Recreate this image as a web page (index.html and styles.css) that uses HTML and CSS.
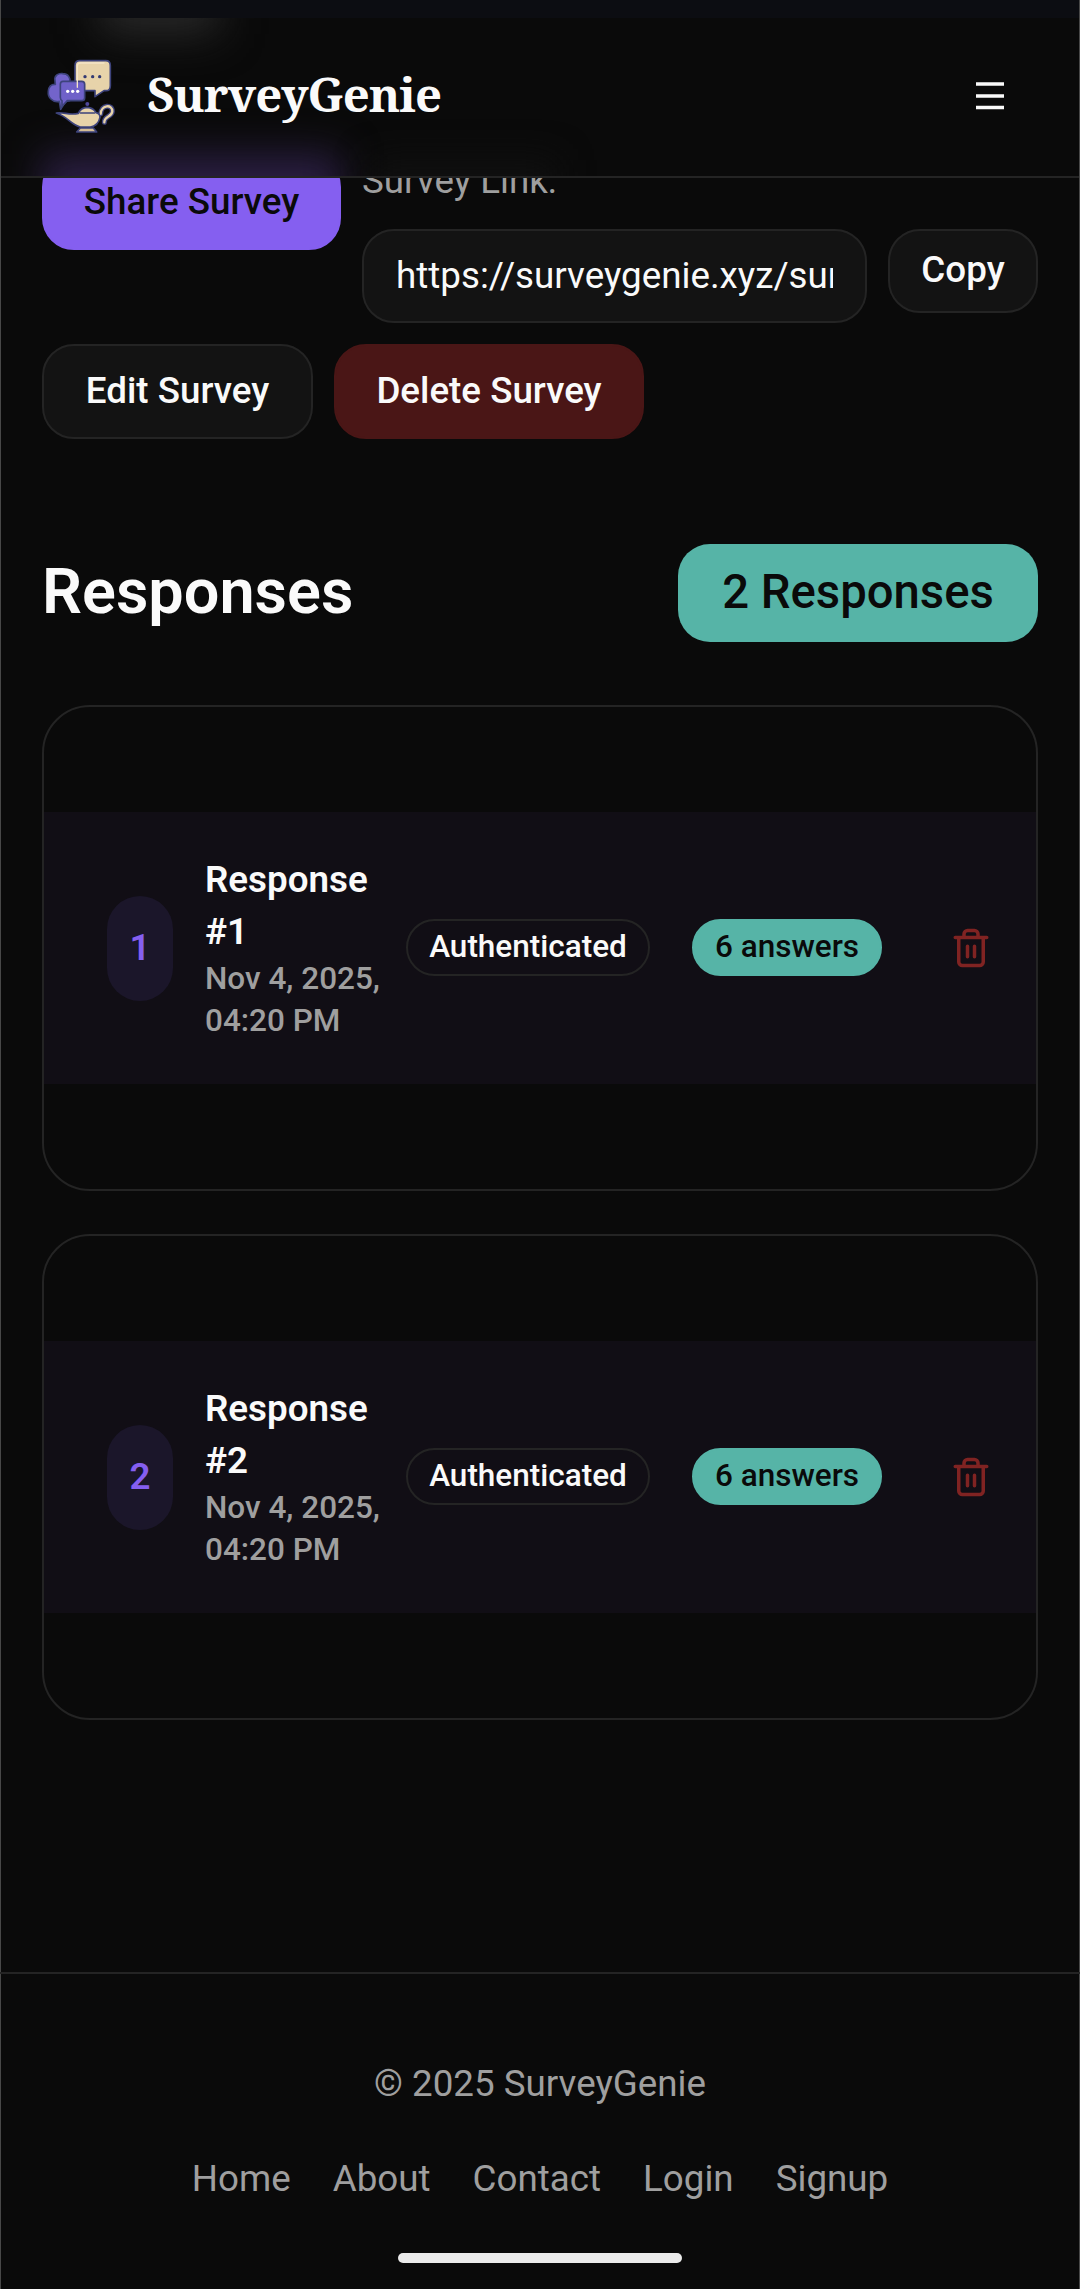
FILE: index.html
```html
<!DOCTYPE html>
<html lang="en">
<head>
<meta charset="utf-8">
<title>SurveyGenie</title>
<link rel="stylesheet" href="styles.css">
</head>
<body>
<div class="app">
  <div class="status-strip"></div>
  <header class="header">
    <span class="glow glow-light"></span>
    <span class="glow glow-accent"></span>
    <span class="glow glow-faint"></span>
    <a class="brand">
      <svg class="logo" viewBox="42 48 225 240" stroke-linejoin="round" stroke-linecap="round">
        <g stroke="#3d437c" stroke-width="5">
          <path fill="#7364cb" d="M75 122C72 106 86 99 98 101C114 101 122 113 119 125L119 182L106 184L92 208L88 184C66 188 53 171 55 154C56 140 64 132 76 133Z"/>
          <path fill="#e7d3aa" d="M149 62H227Q241 62 241 77V137Q241 152 228 152H222L195 170V152H149Q135 150 135 137V77Q135 62 149 62Z"/>
          <path fill="#6f61c9" d="M99 124H155Q164 124 164 133V173Q164 182 155 182H112L96 199V182Q91 180 91 172V133Q91 124 99 124Z"/>
          <path fill="none" stroke-width="15" d="M212 222C213 193 248 192 247 214C246 231 222 228 223 247"/>
          <path fill="none" stroke="#e7d3aa" stroke-width="7" d="M212 222C213 193 248 192 247 214C246 231 222 228 223 247"/>
          <path fill="#e7d3aa" d="M79 219C100 215 119 227 145 220Q152 203 172 202Q190 203 198 218Q210 220 210 232Q205 257 181 261H151C121 253 115 231 79 219Z"/>
          <path fill="#d5bd95" d="M151 264H190L200 276H140Z"/>
        </g>
        <circle cx="172" cy="192" r="6" fill="#4f489c"/>
        <path d="M151 219H194" fill="none" stroke="#3d437c" stroke-width="4"/>
        <path d="M142 142V78Q142 69 152 69H222" fill="none" stroke="#f4e5c8" stroke-width="4"/>
        <g fill="#333a72"><circle cx="165" cy="110" r="5"/><circle cx="188" cy="110" r="5"/><circle cx="209" cy="110" r="5"/></g>
        <g fill="#fff"><circle cx="113" cy="154" r="5"/><circle cx="128" cy="154" r="5"/><circle cx="143" cy="154" r="5"/></g>
      </svg>
      <span class="brand-name">SurveyGenie</span>
    </a>
    <svg class="menu" viewBox="0 0 28 28"><path d="M0 2h28M0 14h28M0 25.5h28" stroke="#fafafa" stroke-width="3.4"/></svg>
  </header>

  <main class="main">
    <section class="actions">
      <div class="share-row">
        <button class="btn btn-primary">Share Survey</button>
        <div class="link">
          <label class="link-label">Survey Link:</label>
          <div class="link-row">
            <div class="link-input"><span class="link-text">https://surveygenie.xyz/survey</span></div>
            <button class="btn btn-copy">Copy</button>
          </div>
        </div>
      </div>
      <div class="edit-row">
        <button class="btn btn-edit">Edit Survey</button>
        <button class="btn btn-delete">Delete Survey</button>
      </div>
    </section>

    <section class="heading">
      <h2 class="title">Responses</h2>
      <span class="count">2 Responses</span>
    </section>

    <section class="cards">
      <article class="card">
        <div class="card-row">
          <span class="num">1</span>
          <div class="info"><span class="name">Response<br>#1</span><span class="date">Nov 4, 2025,<br>04:20 PM</span></div>
          <span class="pill pill-outline">Authenticated</span>
          <span class="pill pill-teal">6 answers</span>
          <svg class="trash" viewBox="0 0 24 24"><path d="M3 6h18M19 6v14c0 1-1 2-2 2H7c-1 0-2-1-2-2V6M8 6V4c0-1 1-2 2-2h4c1 0 2 1 2 2v2M10 11v6M14 11v6"/></svg>
        </div>
      </article>
      <article class="card">
        <div class="card-row">
          <span class="num">2</span>
          <div class="info"><span class="name">Response<br>#2</span><span class="date">Nov 4, 2025,<br>04:20 PM</span></div>
          <span class="pill pill-outline">Authenticated</span>
          <span class="pill pill-teal">6 answers</span>
          <svg class="trash" viewBox="0 0 24 24"><path d="M3 6h18M19 6v14c0 1-1 2-2 2H7c-1 0-2-1-2-2V6M8 6V4c0-1 1-2 2-2h4c1 0 2 1 2 2v2M10 11v6M14 11v6"/></svg>
        </div>
      </article>
    </section>
  </main>

  <footer class="footer">
    <p class="copyright">© 2025 SurveyGenie</p>
    <nav class="links"><a>Home</a><a>About</a><a>Contact</a><a>Login</a><a>Signup</a></nav>
    <div class="home-bar"></div>
  </footer>
</div>
</body>
</html>
```
FILE: styles.css
```css
* { box-sizing: border-box; }
body {
  margin: 0;
  background: #0a0a0a;
  color: #fafafa;
  font-family: Roboto, sans-serif;
  font-size: 36.75px;
}
.app {
  width: 1080px;
  height: 2289px;
  overflow: hidden;
  display: flex;
  flex-direction: column;
  box-shadow: inset 1px 0 #484848, inset -1px 0 #484848;
}
.status-strip { height: 18px; flex: none; margin: 0 1px; background: #0c0d12; }
.header {
  position: relative;
  z-index: 1;
  flex: none;
  height: 160px;
  margin: 0 1px;
  padding: 0 75px 0 43px;
  background: #0a0a0a;
  border-bottom: 2px solid #242424;
  display: flex;
  align-items: center;
  justify-content: space-between;
  overflow: hidden;
}
.glow { position: absolute; }
.glow-light { left: 98px; top: -40px; width: 120px; height: 56px; background: #282828; filter: blur(21px); }
.glow-accent { left: 41px; top: 136px; width: 299px; height: 70px; background: #2a1e42; filter: blur(19px); }
.glow-faint { left: 370px; top: 142px; width: 185px; height: 50px; background: #101010; filter: blur(17px); }
.brand { position: relative; display: flex; align-items: center; gap: 28px; }
.logo { width: 75px; height: 80px; margin-top: -3px; }
.brand-name {
  font-family: "Noto Serif", "Droid Serif", "DejaVu Serif Condensed", "DejaVu Serif", serif;
  font-stretch: condensed;
  font-weight: 700;
  font-size: 47.25px;
  line-height: 64px;
  letter-spacing: -1.02px;
  padding-bottom: 7px;
}
.menu { width: 28px; height: 28px; margin-bottom: 2px; }

.main { padding: 0 42px; flex: none; height: 1794px; }
.actions { margin-top: -23px; }
.share-row { display: flex; gap: 21px; align-items: flex-start; }
.btn {
  font: 500 36.75px Roboto, sans-serif;
  height: 95px;
  padding: 0 0 3px;
  border: 2px solid #242424;
  border-radius: 32px;
  background: #131313;
  color: #fafafa;
  white-space: nowrap;
  flex: none;
}
.btn-primary { width: 299px; background: #855ff0; border-color: #855ff0; color: #0a0a0a; }
.link { width: 676px; }
.link-label { display: block; height: 74px; padding-top: 4px; line-height: 44px; color: #9f9f9f; }
.link-row { display: flex; gap: 21px; }
.link-input {
  width: 505px;
  height: 94px;
  padding: 0 32px;
  border: 2px solid #242424;
  border-radius: 32px;
  background: #131313;
}
.link-text { display: block; overflow: hidden; white-space: nowrap; line-height: 89px; }
.btn-copy { width: 150px; height: 84px; }
.edit-row { display: flex; gap: 21px; margin-top: 21px; }
.btn-edit { width: 271px; }
.btn-delete { width: 310px; background: #4a1616; border-color: #4a1616; }

.heading { display: flex; align-items: center; justify-content: space-between; height: 98px; margin-top: 105px; }
.title { margin: 0; padding-bottom: 2px; font-size: 63px; font-weight: 600; line-height: 76px; }
.count {
  width: 360px;
  height: 98px;
  border-radius: 32px;
  background: #56b4a7;
  color: #0a0a0a;
  font-size: 47.25px;
  font-weight: 500;
  line-height: 96px;
  text-align: center;
}

.cards { margin-top: 63px; display: flex; flex-direction: column; gap: 43px; }
.card { height: 486px; border: 2px solid #242424; border-radius: 48px; padding-top: 105px; }
.card-row {
  height: 272px;
  padding: 0 44px 0 63px;
  background: #110e15;
  display: flex;
  align-items: center;
}
.num {
  width: 66px;
  height: 105px;
  border-radius: 33px;
  background: #1b162a;
  color: #855ff0;
  font-weight: 600;
  line-height: 103px;
  text-align: center;
}
.info { width: 169px; margin-left: 32px; margin-bottom: 1px; display: flex; flex-direction: column; white-space: nowrap; }
.name { font-weight: 600; line-height: 52px; }
.date { font-size: 31.5px; font-weight: 500; line-height: 42px; color: #9f9f9f; }
.pill {
  height: 57px;
  margin-bottom: 1px;
  border-radius: 29px;
  border: 2px solid #242424;
  font-size: 31.5px;
  font-weight: 500;
  line-height: 52px;
  text-align: center;
}
.pill-outline { width: 244px; margin-left: 32px; }
.pill-teal { width: 190px; margin-left: 42px; background: #56b4a7; border-color: #56b4a7; color: #0a0a0a; }
.trash {
  width: 42px;
  height: 42px;
  margin-left: 68px;
  fill: none;
  stroke: #802322;
  stroke-width: 2;
  stroke-linecap: round;
  stroke-linejoin: round;
}

.footer {
  flex: none;
  height: 317px;
  border-top: 2px solid #242424;
  color: #9f9f9f;
  display: flex;
  flex-direction: column;
  align-items: center;
}
.copyright { margin: 84px 0 0; line-height: 52px; }
.links { display: flex; gap: 42px; margin-top: 43px; line-height: 52px; }
.home-bar { width: 284px; height: 10px; border-radius: 5px; margin-top: 48px; background: #ebebeb; }
```
